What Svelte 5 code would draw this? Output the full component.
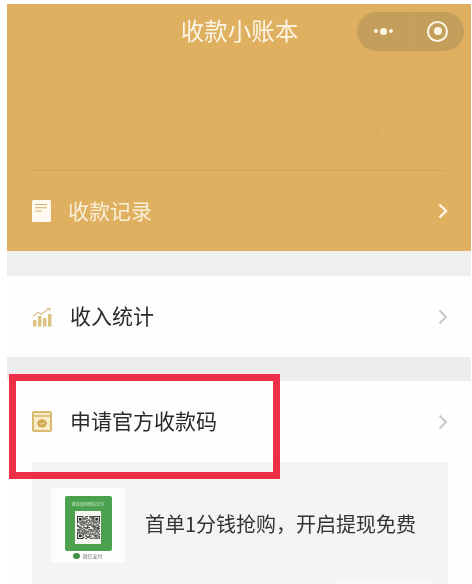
<script>
  // fake qr modules, seeded so the picture stays the same between runs
  const size = 25;
  const cells = [];
  let seed = 7;
  const inFinder = (x, y) => (x < 7 && y < 7) || (x >= size - 7 && y < 7) || (x < 7 && y >= size - 7);
  for (let y = 0; y < size; y++) {
    for (let x = 0; x < size; x++) {
      seed = (seed * 137 + 59) % 1009;
      if (!inFinder(x, y) && seed % 5 < 3) cells.push({ x, y });
    }
  }
  const finders = [[0, 0], [18, 0], [0, 18]];
</script>

<div class="page">
  <section class="hero">
    <header class="navbar">
      <span></span>
      <h1 class="navTitle">收款小账本</h1>
      <div class="capsule">
        <div class="capsuleSide">
          <i class="dot"></i><i class="dot big"></i><i class="dot"></i>
        </div>
        <div class="capsuleSide">
          <span class="target"><i></i></span>
        </div>
      </div>
    </header>

    <div class="amount"><div class="amountBar"></div></div>

    <div class="heroRow">
      <svg class="rowIcon" viewBox="0 0 19 22" width="19" height="22">
        <rect width="19" height="22" rx="1.5" fill="#fffaf0" />
        <path d="M3 4.500h12M3 7.800h12M3 11h7" stroke="#d3ad6c" stroke-width="1.100" fill="none" />
      </svg>
      <span class="heroLabel">收款记录</span>
      <svg class="chevron" viewBox="0 0 10 16" width="10" height="16">
        <path d="M1.500 1.500 8 8l-6.500 6.500" stroke="#fff8ea" stroke-width="2.400" fill="none" />
      </svg>
    </div>
  </section>

  <div class="gap first"></div>

  <div class="row stats">
    <svg class="rowIcon" viewBox="0 0 20 20" width="20" height="20">
      <path d="M1 9.500 6 5l3 2.500L17 1.500" stroke="#d8c486" stroke-width="1.200" fill="none" />
      <path d="M14.500 1h4v3.500z" fill="#d8c486" />
      <rect x="1" y="13" width="3.500" height="6.500" fill="#dcc283" />
      <rect x="6" y="9" width="3.500" height="10.500" fill="#dcc283" />
      <rect x="11" y="11" width="3.500" height="8.500" fill="#dcc283" />
      <rect x="16" y="7" width="3.500" height="12.500" fill="#dcc283" />
    </svg>
    <span class="label">收入统计</span>
    <svg class="chevron" viewBox="0 0 10 16" width="10" height="16">
      <path d="M1.500 1.500 8 8l-6.500 6.500" stroke="#c9c9cb" stroke-width="2" fill="none" />
    </svg>
  </div>

  <div class="gap"></div>

  <section class="apply">
    <div class="row applyRow">
      <svg class="rowIcon" viewBox="0 0 20 21" width="20" height="21">
        <rect x="1" y="1" width="18" height="19" rx="1" fill="#f8eccb" stroke="#d9ba70" stroke-width="2" />
        <path d="M1 5h18" stroke="#d9ba70" stroke-width="1.600" />
        <ellipse cx="10" cy="12.300" rx="4.800" ry="4" fill="#cfa750" />
        <path d="M7.500 12.600 9.500 13.300l3.200-2.200" stroke="#f8eccb" stroke-width="0.900" fill="none" />
      </svg>
      <span class="label">申请官方收款码</span>
      <svg class="chevron" viewBox="0 0 10 16" width="10" height="16">
        <path d="M1.500 1.500 8 8l-6.500 6.500" stroke="#c9c9cb" stroke-width="2" fill="none" />
      </svg>
    </div>

    <div class="promo">
      <div class="thumb">
        <div class="greenCard">
          <span class="greenHead">推荐使用微信支付</span>
          <div class="qr">
            <svg viewBox="0 0 25 25" width="23" height="23">
              {#each cells as c}
                <rect x={c.x} y={c.y} width="1" height="1" fill="#2b2b2b" />
              {/each}
              {#each finders as [fx, fy]}
                <rect x={fx + 0.500} y={fy + 0.500} width="6" height="6" fill="none" stroke="#2b2b2b" />
                <rect x={fx + 2} y={fy + 2} width="3" height="3" fill="#2b2b2b" />
              {/each}
            </svg>
          </div>
        </div>
        <div class="payMark">
          <i class="payDot"></i>
          <span>微信支付</span>
        </div>
      </div>
      <p class="promoText">首单1分钱抢购，开启提现免费</p>
    </div>
  </section>

  <div class="highlight"></div>
  <div class="watermark"></div>
</div>

<style>
  :global(body) {
    margin: 0;
    background: #fff;
  }

  .page {
    position: relative;
    box-sizing: border-box;
    width: 472px;
    height: 584px;
    padding: 4px 1px 0 7px;
    overflow: hidden;
    font-family: "Noto Sans CJK SC", "Noto Sans", sans-serif;
    color: #2a2a2a;
    filter: blur(0.4px);
  }

  .hero {
    height: 247px;
    display: flex;
    flex-direction: column;
    background: #deb05f;
    color: #fdf6e6;
  }

  .navbar {
    display: grid;
    grid-template-columns: 1fr auto 1fr;
    align-items: center;
    height: 54px;
  }

  .navTitle {
    margin: 0 0 0 1px;
    font-size: 23.500px;
    font-weight: 400;
    line-height: 1;
  }

  .capsule {
    justify-self: end;
    display: flex;
    width: 107px;
    height: 39px;
    margin-right: 7px;
    border-radius: 20px;
    background: #c49f5c;
  }

  .capsuleSide {
    flex: 1;
    display: flex;
    align-items: center;
    justify-content: center;
    gap: 2px;
  }

  .capsuleSide + .capsuleSide {
    border-left: 1px solid #c8a35e;
  }

  .dot {
    width: 4px;
    height: 4px;
    border-radius: 50%;
    background: #fdf6e6;
  }

  .dot.big {
    width: 7px;
    height: 7px;
  }

  .target {
    display: flex;
    align-items: center;
    justify-content: center;
    width: 21px;
    height: 21px;
    box-sizing: border-box;
    border: 2.500px solid #fdf6e6;
    border-radius: 50%;
  }

  .target i {
    width: 8px;
    height: 8px;
    border-radius: 50%;
    background: #fdf6e6;
  }

  .amount {
    box-sizing: border-box;
    height: 113px;
    margin: 0 25px;
    padding: 64px 66px 0;
    border-bottom: 1px solid #d3a557;
  }

  .amountBar {
    height: 17px;
    border-radius: 9px;
    background: #dbae60;
  }

  .heroRow {
    flex: 1;
    display: flex;
    align-items: center;
    gap: 17px;
    padding: 0 23px 0 25px;
  }

  .heroLabel {
    flex: 1;
    margin-top: -2px;
    font-size: 21px;
    line-height: 1;
    opacity: 0.9;
  }

  .rowIcon {
    flex: none;
  }

  .chevron {
    flex: none;
  }

  .gap {
    height: 24px;
    background: #ededef;
  }

  .gap.first {
    height: 25px;
    background: #efeff0;
  }

  .row {
    display: flex;
    align-items: center;
    gap: 18px;
    padding: 0 23px 0 25px;
    background: #fefefe;
  }

  .stats {
    height: 81px;
  }

  .applyRow {
    height: 81px;
  }

  .label {
    flex: 1;
    margin-top: -2px;
    font-size: 21px;
    line-height: 1;
  }

  .apply {
    height: 203px;
    background: #fefefe;
  }

  .promo {
    display: flex;
    align-items: flex-start;
    gap: 20px;
    height: 122px;
    margin: 0 23px 0 25px;
    padding: 26px 19px 0;
    background: #f5f3f4;
  }

  .thumb {
    flex: none;
    display: flex;
    flex-direction: column;
    align-items: center;
    box-sizing: border-box;
    width: 74px;
    height: 74px;
    padding-top: 8px;
    background: #fdfdfd;
  }

  .greenCard {
    display: flex;
    flex-direction: column;
    align-items: center;
    box-sizing: border-box;
    width: 47px;
    height: 55px;
    padding-top: 5px;
    border-radius: 2px;
    background: #4ba14d;
  }

  .greenHead {
    font-size: 4px;
    line-height: 6px;
    white-space: nowrap;
    color: #cfe8cf;
  }

  .qr {
    display: flex;
    align-items: center;
    justify-content: center;
    width: 26px;
    height: 33px;
    margin-top: 4px;
    background: #f6f6f0;
  }

  .payMark {
    display: flex;
    align-items: center;
    gap: 2px;
    margin-top: 1px;
    font-size: 5px;
    line-height: 8px;
    color: #777;
  }

  .payDot {
    width: 7px;
    height: 6px;
    border-radius: 50%;
    background: #3f8f43;
  }

  .promoText {
    margin: 26px 0 0;
    font-size: 20px;
    line-height: 1;
    white-space: nowrap;
    color: #333;
  }

  .highlight {
    position: absolute;
    left: 9px;
    top: 374px;
    box-sizing: border-box;
    width: 271px;
    height: 105px;
    border: 7px solid #ee2e47;
  }

  /* remains of a watermark cut off by the bottom edge */
  .watermark {
    position: absolute;
    left: 334px;
    top: 581px;
    width: 96px;
    height: 6px;
    border-radius: 3px;
    background: rgba(255, 255, 255, 0.7);
    filter: blur(2px);
  }
</style>
